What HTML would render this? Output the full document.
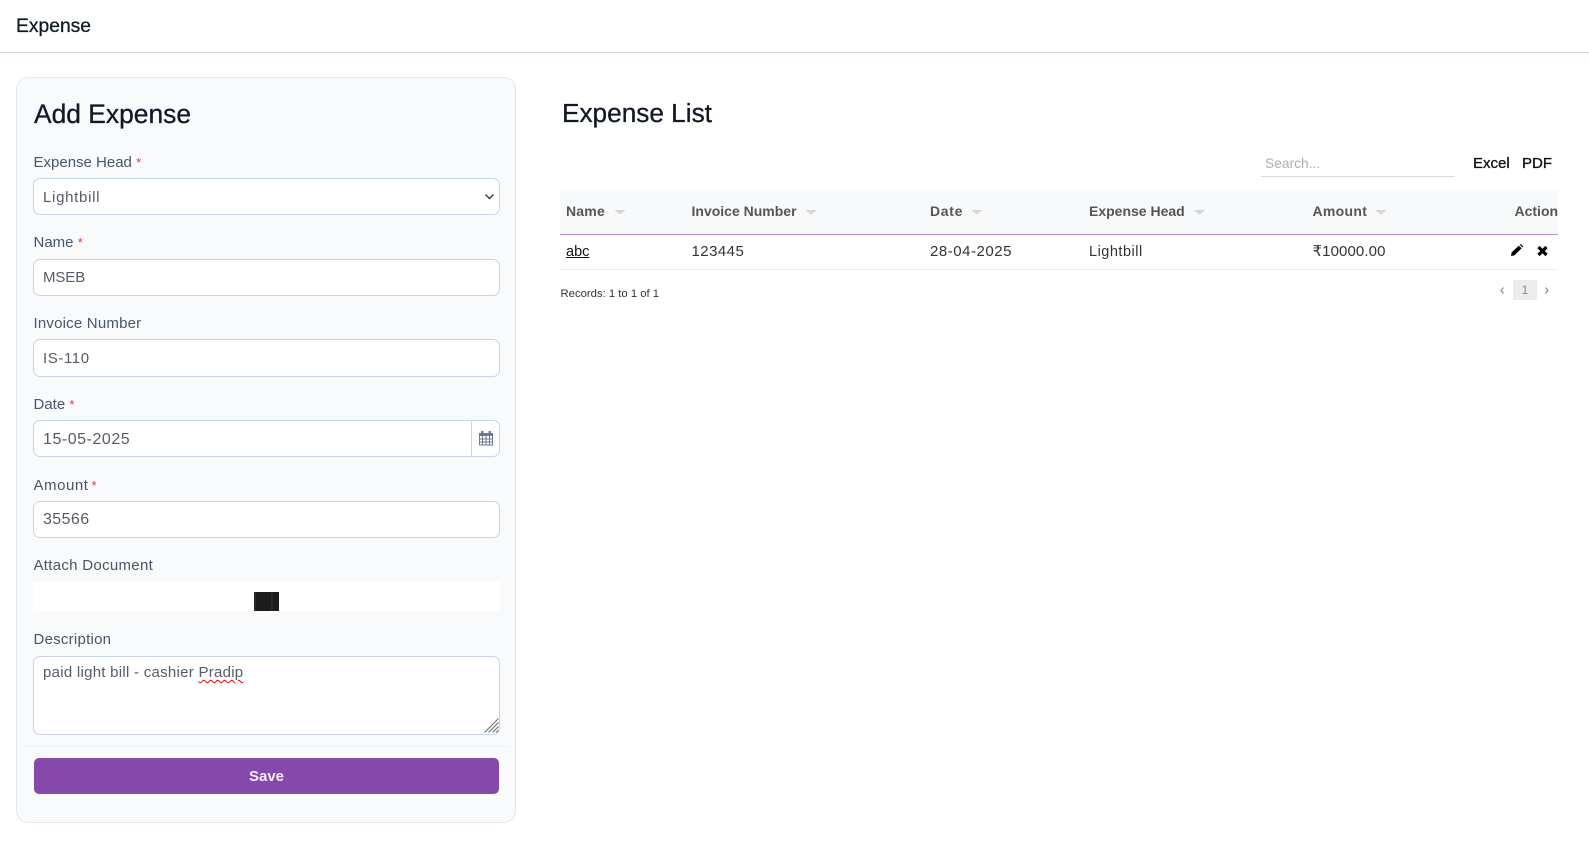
<!DOCTYPE html>
<html lang="en">
<head>
<meta charset="utf-8">
<title>Expense</title>
<style>
html,body{margin:0;padding:0;width:1589px;height:846px;overflow:hidden;background:#fff;}
body{font-family:"Liberation Sans",sans-serif;position:relative;}
.t{position:absolute;white-space:nowrap;line-height:20px;height:20px;}
.b{position:absolute;box-sizing:border-box;}
.in{background:#fff;border:1px solid #c9d4e5;border-radius:7px;left:33px;width:467px;}
.lb{font-size:15px;color:#4a5568;left:33.5px;}
.v{font-size:15px;color:#555b66;left:43px;letter-spacing:.27px;}
.r{color:#f0304f;font-size:13px;}
.th{font-size:14px;font-weight:bold;color:#555;top:201px;}
.td{font-size:15px;color:#333;top:242px;}
.hd{-webkit-text-stroke:.3px currentColor;}
svg{position:absolute;display:block;}
</style>
</head>
<body>
<div class="t hd" style="left:16px;top:17px;font-size:19.3px;color:#111827;">Expense</div>
<div class="b" style="left:0;top:52px;width:1589px;height:1px;background:#cbd5e1;"></div>

<div class="b" style="left:16px;top:77px;width:500px;height:746px;background:#f8fafc;border:1px solid #e2e8f0;border-radius:12px;"></div>
<div class="t hd" style="left:34px;top:104px;font-size:26.4px;color:#111827;">Add Expense</div>

<div class="t lb" style="top:153px;">Expense Head <span class="r">*</span></div>
<div class="b in" style="top:178px;height:37px;"></div>
<div class="t v" style="top:188px;letter-spacing:.7px;">Lightbill</div>
<svg style="left:484px;top:193px;" width="11" height="8" viewBox="0 0 11 8"><path d="M1.500 1.500 5.500 5.500 9.500 1.500" fill="none" stroke="#343a40" stroke-width="1.400"/></svg>

<div class="t lb" style="top:233px;">Name <span class="r">*</span></div>
<div class="b in" style="top:259px;height:37px;"></div>
<div class="t v" style="top:268px;letter-spacing:-.1px;">MSEB</div>

<div class="t lb" style="top:314px;letter-spacing:.2px;">Invoice Number</div>
<div class="b in" style="top:339px;height:38px;"></div>
<div class="t v" style="top:349px;letter-spacing:.6px;">IS-110</div>

<div class="t lb" style="top:395px;">Date <span class="r">*</span></div>
<div class="b in" style="top:420px;height:37px;"></div>
<div class="b" style="left:471px;top:420px;width:1px;height:37px;background:#c9d4e5;"></div>
<div class="t v" style="top:430px;font-size:16px;letter-spacing:.54px;">15-05-2025</div>
<svg style="left:478px;top:431px;" width="16" height="15" viewBox="0 0 16 15"><path d="M3 0h2.500v3H3zM10.500 0H13v3h-2.500z" fill="#6b7b93"/><path d="M1 2h14v3H1z" fill="#6b7b93"/><path d="M1.500 5v9h13V5M1.500 8h13M1.500 11h13M4.500 5v9M8 5v9M11.500 5v9" fill="none" stroke="#6b7b93" stroke-width="1"/></svg>

<div class="t lb" style="top:476px;letter-spacing:.55px;">Amount<span class="r" style="margin-left:3px;">*</span></div>
<div class="b in" style="top:501px;height:37px;"></div>
<div class="t v" style="top:510px;font-size:16px;letter-spacing:.4px;">35566</div>

<div class="t lb" style="top:556px;letter-spacing:.3px;">Attach Document</div>
<div class="b" style="left:33px;top:582px;width:467px;height:29px;background:#fff;"></div>
<div class="b" style="left:254px;top:592px;width:25px;height:19px;background:#1c1c1c;"></div>
<div class="b" style="left:254px;top:592px;width:2px;height:19px;background:#2d2a26;"></div>
<div class="b" style="left:271px;top:592px;width:2px;height:19px;background:#2a2a2a;"></div>

<div class="t lb" style="top:630px;letter-spacing:.25px;">Description</div>
<div class="b in" style="top:656px;height:79px;"></div>
<div class="t v" style="top:663px;">paid light bill - cashier <span style="text-decoration:underline wavy #e00 1px;text-underline-offset:2px;">Pradip</span></div>
<svg style="left:484px;top:718px;" width="15" height="15" viewBox="0 0 15 15"><path d="M0.500 14.500 14.500 .5M4.500 14.500 14.500 4.500M8.500 14.500 14.500 8.500M12 14.500 14.500 12" stroke="#777" stroke-width="1.200" fill="none"/></svg>

<div class="b" style="left:24px;top:746px;width:486px;height:1px;background:#eef1f5;"></div>
<div class="b" style="left:34px;top:758px;width:465px;height:36px;background:#8748ab;border-radius:5px;"></div>
<div class="t" style="left:34px;width:465px;text-align:center;top:767px;font-size:15px;font-weight:bold;color:#f5eefa;">Save</div>

<div class="t hd" style="left:562px;top:103px;font-size:26.2px;color:#111827;">Expense List</div>

<div class="t" style="left:1265px;top:154px;font-size:13.800px;color:#a9adb5;">Search...</div>
<div class="b" style="left:1261px;top:176px;width:194px;height:1px;background:#d9d9d9;"></div>
<div class="t hd" style="left:1473px;top:154px;font-size:15px;color:#111;-webkit-text-stroke-width:.3px;">Excel</div>
<div class="t hd" style="left:1522px;top:154px;font-size:15px;color:#111;-webkit-text-stroke-width:.3px;">PDF</div>

<div class="b" style="left:560px;top:190px;width:998px;height:44px;background:#f8f9fb;"></div>
<div class="b" style="left:560px;top:234px;width:998px;height:1px;background:#b98fd9;"></div>
<div class="t th" style="left:566px;letter-spacing:.2px;">Name</div>
<div class="t th" style="left:691.500px;">Invoice Number</div>
<div class="t th" style="left:930px;letter-spacing:.7px;">Date</div>
<div class="t th" style="left:1089px;">Expense Head</div>
<div class="t th" style="left:1312.500px;letter-spacing:.3px;">Amount</div>
<div class="t th" style="left:1514.500px;">Action</div>
<svg style="left:0;top:0;" width="1589" height="300"><g fill="#d6d6d6" stroke="#d6d6d6" stroke-width="1" stroke-linejoin="round"><path d="M615.500 210.500h9l-4.500 3.500z"/><path d="M806.500 210.500h9l-4.500 3.500z"/><path d="M972.500 210.500h9l-4.500 3.500z"/><path d="M1195 210.500h9l-4.500 3.500z"/><path d="M1376.500 210.500h9l-4.500 3.500z"/></g></svg>

<div class="t td" style="left:566px;color:#111;text-decoration:underline;font-size:14.5px;">abc</div>
<div class="t td" style="left:691.500px;letter-spacing:.45px;">123445</div>
<div class="t td" style="left:930px;letter-spacing:.53px;">28-04-2025</div>
<div class="t td" style="left:1089px;font-size:14.5px;letter-spacing:.5px;">Lightbill</div>
<div class="t td" style="left:1312.500px;letter-spacing:.1px;">₹10000.00</div>
<svg style="left:1510px;top:244px;" width="14" height="13" viewBox="0 0 14 13"><path d="M1 12 1.600 8.500 8.800 1.600 11.600 4.300 4.400 11.400z" fill="#000"/><path d="M9.800 .8 10.800 0 13.200 2.400 12.500 3.400z" fill="#000"/></svg>
<svg style="left:1537px;top:246px;" width="11" height="10" viewBox="0 0 11 10"><path d="M1.500 1 9.500 9M9.500 1 1.500 9" stroke="#000" stroke-width="3.200"/></svg>
<div class="b" style="left:560px;top:269px;width:998px;height:1px;background:#eeeeee;"></div>

<div class="t" style="left:560.500px;top:284px;font-size:11.300px;color:#333;">Records: 1 to 1 of 1</div>
<div class="b" style="left:1513px;top:280px;width:24px;height:20px;background:#ececec;"></div>
<div class="t" style="left:1513px;width:24px;text-align:center;top:281px;font-size:11.500px;color:#888;">1</div>
<svg style="left:1499px;top:286px;" width="6" height="9" viewBox="0 0 6 9"><path d="M4.500 1.500 2 4.500 4.500 7.500" fill="none" stroke="#888" stroke-width="1.100"/></svg>
<svg style="left:1544px;top:286px;" width="6" height="9" viewBox="0 0 6 9"><path d="M1.500 1.500 4 4.500 1.500 7.500" fill="none" stroke="#888" stroke-width="1.100"/></svg>
</body>
</html>
